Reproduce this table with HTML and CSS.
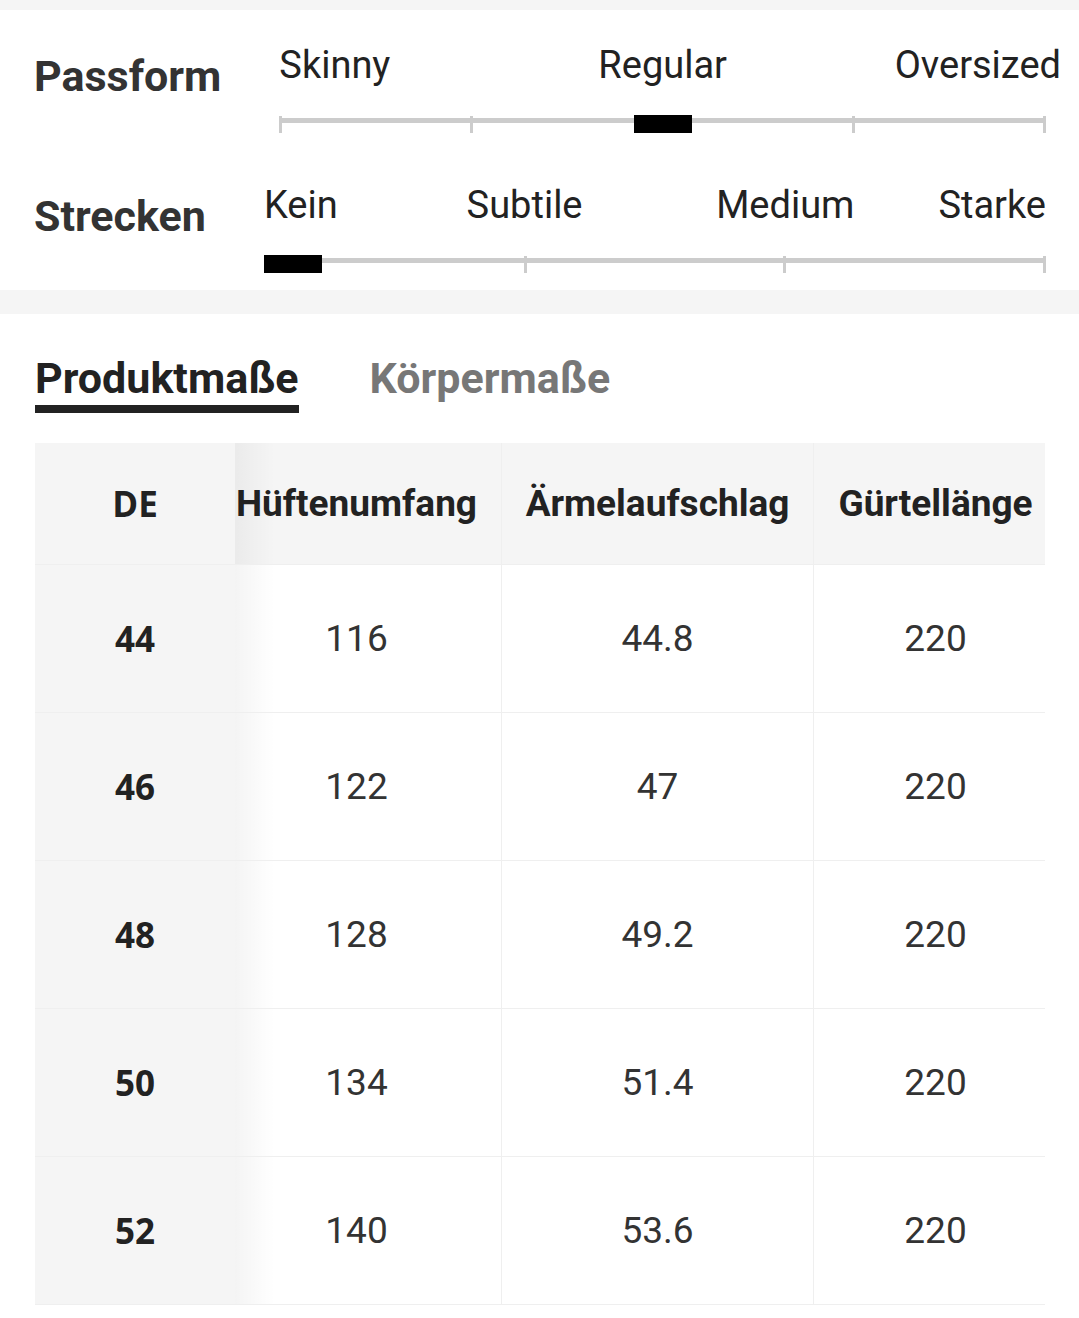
FILE: index.html
```html
<!DOCTYPE html>
<html lang="de">
<head>
<meta charset="utf-8">
<title>Größentabelle</title>
<link rel="stylesheet" href="styles.css">
</head>
<body>
<div class="band band-top"></div>
<section class="fit">
  <div class="fit-row">
    <div class="fit-label">Passform</div>
    <div class="slider">
      <div class="slider-labels cols-4">
        <span class="lab lab-start">Skinny</span>
        <span class="lab lab-mid span-2">Regular</span>
        <span class="lab lab-end lab-over">Oversized</span>
      </div>
      <div class="track">
        <div class="bar"></div>
        <div class="ticks"><i></i><i></i><i></i><i></i><i></i></div>
        <div class="thumb" style="--p:0.5"></div>
      </div>
    </div>
  </div>
  <div class="fit-row">
    <div class="fit-label">Strecken</div>
    <div class="slider">
      <div class="slider-labels cols-6">
        <span class="lab lab-start">Kein</span>
        <span class="lab lab-mid span-2">Subtile</span>
        <span class="lab lab-mid span-2">Medium</span>
        <span class="lab lab-end">Starke</span>
      </div>
      <div class="track">
        <div class="bar"></div>
        <div class="ticks"><i></i><i></i><i></i><i></i></div>
        <div class="thumb" style="--p:0"></div>
      </div>
    </div>
  </div>
</section>
<div class="band band-mid"></div>
<section class="sizes">
  <div class="tabs">
    <div class="tab tab-active">Produktmaße</div>
    <div class="tab">Körpermaße</div>
  </div>
  <div class="table">
    <div class="row row-head">
      <div class="cell c-de">DE</div>
      <div class="cell c-hip">Hüftenumfang</div>
      <div class="cell c-sleeve">Ärmelaufschlag</div>
      <div class="cell c-belt">Gürtellänge</div>
    </div>
    <div class="row">
      <div class="cell c-de">44</div>
      <div class="cell c-hip">116</div>
      <div class="cell c-sleeve">44.8</div>
      <div class="cell c-belt">220</div>
    </div>
    <div class="row">
      <div class="cell c-de">46</div>
      <div class="cell c-hip">122</div>
      <div class="cell c-sleeve">47</div>
      <div class="cell c-belt">220</div>
    </div>
    <div class="row">
      <div class="cell c-de">48</div>
      <div class="cell c-hip">128</div>
      <div class="cell c-sleeve">49.2</div>
      <div class="cell c-belt">220</div>
    </div>
    <div class="row">
      <div class="cell c-de">50</div>
      <div class="cell c-hip">134</div>
      <div class="cell c-sleeve">51.4</div>
      <div class="cell c-belt">220</div>
    </div>
    <div class="row">
      <div class="cell c-de">52</div>
      <div class="cell c-hip">140</div>
      <div class="cell c-sleeve">53.6</div>
      <div class="cell c-belt">220</div>
    </div>
  </div>
</section>
</body>
</html>
```

FILE: styles.css
```css
* { box-sizing: border-box; }

body {
  margin: 0;
  background: #ffffff;
  font-family: Roboto, "Liberation Sans", Arial, sans-serif;
  color: #222222;
}

.band { background: #f5f5f5; }
.band-top { height: 10px; }
.band-mid { height: 24px; }

/* fit sliders */
.fit {
  padding: 0 33px 0 34px;
}

.fit-row {
  display: flex;
  align-items: flex-start;
  gap: 58px;
  height: 140px;
}

.fit-label {
  margin-top: 45px;
  font-size: 43px;
  line-height: 43px;
  font-weight: 700;
  color: #333333;
  white-space: nowrap;
}

.slider {
  flex: 1;
  padding-top: 36px;
}

.slider-labels {
  display: grid;
  font-size: 38px;
  line-height: 38px;
  color: #222222;
  white-space: nowrap;
}
.cols-4 { grid-template-columns: repeat(4, 1fr); }
.cols-6 { grid-template-columns: repeat(6, 1fr); }

.lab-start { justify-self: start; }
.lab-mid { justify-self: center; }
.lab-end { justify-self: end; }
.span-2 { grid-column: span 2; }
.lab-over { margin-right: -15px; }

.track {
  position: relative;
  height: 18px;
  margin-top: 31px;
}

.bar {
  position: absolute;
  left: 0;
  right: 0;
  top: 3px;
  height: 5px;
  background: #cccccc;
}

.ticks {
  display: flex;
  justify-content: space-between;
  height: 18px;
  padding-top: 1px;
}
.ticks i {
  display: block;
  width: 3px;
  height: 17px;
  background: #cccccc;
}

.thumb {
  position: absolute;
  top: 0;
  left: calc(var(--p) * (100% - 58px));
  width: 58px;
  height: 18px;
  background: #000000;
}

/* tabs */
.tabs {
  display: flex;
  gap: 71px;
  padding: 43px 0 0 35px;
}

.tab {
  font-size: 43px;
  line-height: 43px;
  font-weight: 700;
  color: #777777;
  padding-bottom: 5px;
  border-bottom: 8px solid transparent;
}
.tab-active {
  color: #222222;
  border-bottom-color: #222222;
}

/* table */
.table {
  margin: 30px 0 0 35px;
  width: 1010px;
  overflow: hidden;
}

.row {
  display: flex;
  height: 148px;
  border-bottom: 1px solid #efefef;
}

.row-head {
  height: 122px;
  background: #f5f5f5;
}

.cell {
  display: flex;
  align-items: center;
  justify-content: center;
  font-size: 37px;
  color: #333333;
  white-space: nowrap;
}

.row-head .cell {
  font-size: 37px;
  font-weight: 700;
  color: #222222;
}

.c-de {
  position: relative;
  z-index: 2;
  width: 200px;
  flex: none;
  background: #f5f5f5;
  font-family: "Open Sans", Roboto, sans-serif;
  font-weight: 700;
  font-size: 35px;
  color: #222222;
}
.row-head .c-de {
  font-family: "Open Sans", Roboto, sans-serif;
  font-size: 35px;
}

.c-de::after {
  content: "";
  position: absolute;
  top: 0;
  bottom: 0;
  left: 100%;
  width: 40px;
  background: linear-gradient(to right, rgba(0, 0, 0, 0.045), rgba(0, 0, 0, 0));
}

.c-hip {
  width: 290px;
  flex: none;
  margin-left: -24px;
  border-left: 1px solid #efefef;
}

.c-sleeve {
  width: 312px;
  flex: none;
  border-left: 1px solid #efefef;
}

.c-belt {
  width: 244px;
  flex: none;
  border-left: 1px solid #efefef;
}
```
